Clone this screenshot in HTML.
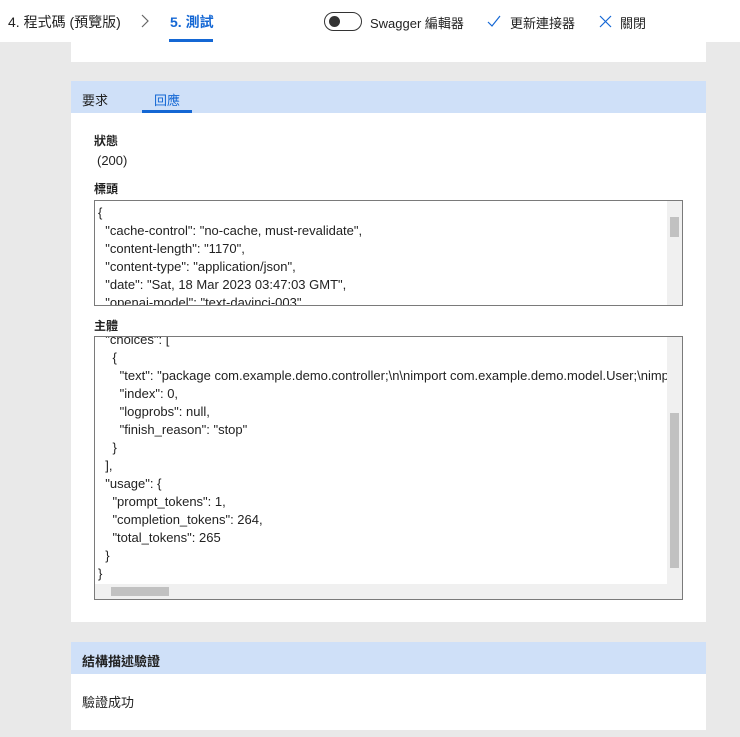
<!DOCTYPE html>
<html><head><meta charset="utf-8"><style>
*{margin:0;padding:0;box-sizing:border-box}
body{width:740px;height:737px;background:#e9e9e9;font-family:"Liberation Sans","Noto Sans CJK TC",sans-serif;color:#222;position:relative;overflow:hidden;font-size:13px}
.abs{position:absolute}
.top{left:0;top:0;width:740px;height:42px;background:#fff}
.panel{background:#fff;left:71px;width:635px}
.hdr{background:#cfe0f8;left:71px;width:635px}
.box{border:1px solid #7a7a7a;background:#fff;overflow:hidden}
.ln{position:absolute;left:3px;white-space:pre;font-size:13px;line-height:18px}
.sb{position:absolute;background:#f0f0f0}
.lab{font-size:12px;font-weight:bold}
</style></head><body>
<div class="abs top"></div>
<div class="abs" style="left:8px;top:12px;font-size:14px">4. 程式碼 (預覽版)</div>
<svg class="abs" style="left:140px;top:14px" width="10" height="14"><path d="M2 1 L8 7 L2 13" fill="none" stroke="#666" stroke-width="1.2"/></svg>
<div class="abs" style="left:170px;top:12px;font-size:14px;color:#1467d4;font-weight:bold">5. 測試</div>
<div class="abs" style="left:169px;top:39px;width:44px;height:3px;background:#1467d4"></div>
<div class="abs" style="left:324px;top:12px;width:38px;height:19px;border:1px solid #333;border-radius:10px"></div>
<div class="abs" style="left:329px;top:16px;width:11px;height:11px;border-radius:50%;background:#333"></div>
<div class="abs" style="left:370px;top:13px;font-size:13px">Swagger 編輯器</div>
<svg class="abs" style="left:487px;top:14px" width="14" height="14"><path d="M1 8 L5 12 L13 2" fill="none" stroke="#1467d4" stroke-width="1.2"/></svg>
<div class="abs" style="left:510px;top:13px;font-size:13px">更新連接器</div>
<svg class="abs" style="left:599px;top:15px" width="13" height="13"><path d="M1 1 L12 12 M12 1 L1 12" fill="none" stroke="#1467d4" stroke-width="1.2"/></svg>
<div class="abs" style="left:620px;top:13px;font-size:13px">關閉</div>

<div class="abs panel" style="top:42px;height:20px"></div>
<div class="abs panel" style="top:81px;height:541px"></div>
<div class="abs hdr" style="top:81px;height:32px"></div>
<div class="abs" style="left:82px;top:90px">要求</div>
<div class="abs" style="left:154px;top:90px;color:#1467d4">回應</div>
<div class="abs" style="left:142px;top:110px;width:50px;height:3px;background:#1467d4"></div>
<div class="abs lab" style="left:94px;top:132px">狀態</div>
<div class="abs" style="left:97px;top:153px">(200)</div>
<div class="abs lab" style="left:94px;top:180px">標頭</div>
<div class="abs box" style="left:94px;top:200px;width:589px;height:106px">
<div class="ln" style="top:3px">{</div>
<div class="ln" style="top:21px">  "cache-control": "no-cache, must-revalidate",</div>
<div class="ln" style="top:39px">  "content-length": "1170",</div>
<div class="ln" style="top:57px">  "content-type": "application/json",</div>
<div class="ln" style="top:75px">  "date": "Sat, 18 Mar 2023 03:47:03 GMT",</div>
<div class="ln" style="top:93px">  "openai-model": "text-davinci-003"</div>
<div class="sb" style="right:0;top:0;width:15px;height:104px"></div>
<div class="abs" style="right:3px;top:16px;width:9px;height:20px;background:#c1c1c1"></div>
</div>
<div class="abs lab" style="left:94px;top:317px">主體</div>
<div class="abs box" style="left:94px;top:336px;width:589px;height:264px">
<div class="ln" style="top:-6px">  "choices": [</div>
<div class="ln" style="top:12px">    {</div>
<div class="ln" style="top:30px">      "text": "package com.example.demo.controller;\n\nimport com.example.demo.model.User;\nimport</div>
<div class="ln" style="top:48px">      "index": 0,</div>
<div class="ln" style="top:66px">      "logprobs": null,</div>
<div class="ln" style="top:84px">      "finish_reason": "stop"</div>
<div class="ln" style="top:102px">    }</div>
<div class="ln" style="top:120px">  ],</div>
<div class="ln" style="top:138px">  "usage": {</div>
<div class="ln" style="top:156px">    "prompt_tokens": 1,</div>
<div class="ln" style="top:174px">    "completion_tokens": 264,</div>
<div class="ln" style="top:192px">    "total_tokens": 265</div>
<div class="ln" style="top:210px">  }</div>
<div class="ln" style="top:228px">}</div>
<div class="sb" style="right:0;top:0;width:15px;height:262px"></div>
<div class="abs" style="right:3px;top:76px;width:9px;height:155px;background:#c1c1c1"></div>
<div class="sb" style="left:0;bottom:0;width:572px;height:15px"></div>
<div class="abs" style="left:16px;bottom:3px;width:58px;height:9px;background:#c1c1c1"></div>
</div>

<div class="abs panel" style="top:642px;height:88px"></div>
<div class="abs hdr" style="top:642px;height:32px"></div>
<div class="abs" style="left:82px;top:651px;font-weight:bold">結構描述驗證</div>
<div class="abs" style="left:82px;top:692px">驗證成功</div>
</body></html>
